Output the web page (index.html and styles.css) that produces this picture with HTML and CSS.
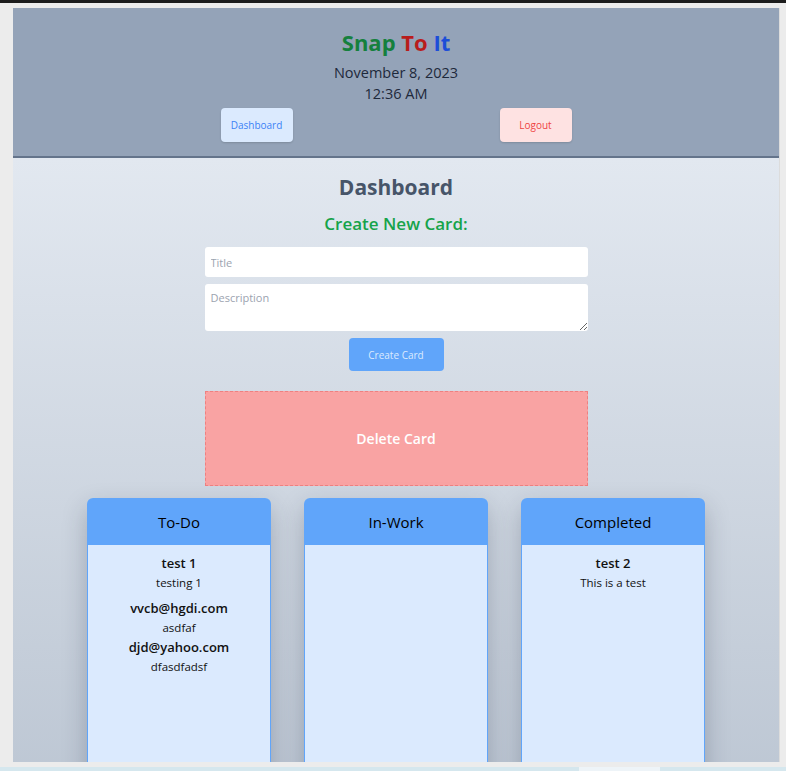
FILE: index.html
```html
<!DOCTYPE html>
<html lang="en">
<head>
  <meta charset="UTF-8">
  <title>Snap To It</title>
  <link rel="stylesheet" href="styles.css">
</head>
<body>

  <div class="topbar"></div>

  <div class="frame">
    <header class="header">
      <h1 class="logo"><span class="green">Snap</span> <span class="red">To</span> <span class="blue">It</span></h1>
      <div class="date">November 8, 2023</div>
      <div class="time">12:36 AM</div>
      <nav class="nav">
        <button class="nav-btn dash">Dashboard</button>
        <button class="nav-btn logout">Logout</button>
      </nav>
    </header>

    <main class="main">
      <h2 class="page-title">Dashboard</h2>
      <h3 class="create-title">Create New Card:</h3>

      <form class="create-form">
        <input type="text" placeholder="Title">
        <textarea placeholder="Description"></textarea>
        <button type="button" class="create-btn">Create Card</button>
      </form>

      <div class="delete-zone">Delete Card</div>

      <div class="columns">
        <div class="column">
          <div class="column-head">To-Do</div>
          <div class="column-body">
            <div class="card first">
              <div class="card-title">test 1</div>
              <div class="card-desc">testing 1</div>
            </div>
            <div class="card">
              <div class="card-title">vvcb@hgdi.com</div>
              <div class="card-desc">asdfaf</div>
            </div>
            <div class="card">
              <div class="card-title">djd@yahoo.com</div>
              <div class="card-desc">dfasdfadsf</div>
            </div>
          </div>
        </div>
        <div class="column">
          <div class="column-head">In-Work</div>
          <div class="column-body"></div>
        </div>
        <div class="column">
          <div class="column-head">Completed</div>
          <div class="column-body">
            <div class="card first">
              <div class="card-title">test 2</div>
              <div class="card-desc">This is a test</div>
            </div>
          </div>
        </div>
      </div>
    </main>
  </div>

  <div class="bottombar">
    <span class="seg"></span>
  </div>

</body>
</html>
```

FILE: styles.css
```css
body {
  margin: 0;
  height: 771px;
  overflow: hidden;
  background-color: #ececec;
  font-family: "Open Sans", "Noto Sans", sans-serif;
}
.topbar {
  height: 3px;
  background-color: #1c1c1c;
}
.frame {
  margin: 5px 0 0 13px;
  width: 766px;
  height: 754px;
  overflow: hidden;
  border-right: 1px solid #dcdcdc;
  display: flex;
  flex-direction: column;
}
.header {
  background-color: #94a3b8;
  border-bottom: 2px solid #64748b;
  height: 150px;
  box-sizing: border-box;
  padding-top: 20px;
  text-align: center;
  flex-shrink: 0;
}
.logo {
  margin: 0;
  font-size: 22px;
  line-height: 28px;
  font-weight: bold;
}
.green { color: #15803d; }
.red { color: #b91c1c; }
.blue { color: #1d4ed8; }
.date, .time {
  font-size: 14.5px;
  line-height: 21px;
  color: #1e293b;
}
.date { margin-top: 6px; }
.nav {
  display: flex;
  justify-content: center;
  gap: 207px;
  margin-top: 4px;
}
.nav-btn {
  width: 72px;
  height: 34px;
  border: none;
  border-radius: 4px;
  font-family: inherit;
  font-size: 10px;
  box-shadow: 0 1px 2px rgba(0, 0, 0, 0.15);
}
.dash {
  background-color: #dbeafe;
  color: #3b82f6;
}
.logout {
  background-color: #fee2e2;
  color: #ef4444;
}
.main {
  flex: 1;
  background: linear-gradient(#e2e8f0, #bcc6d3);
  text-align: center;
  padding-top: 15px;
}
.page-title {
  margin: 0;
  font-size: 21px;
  line-height: 28px;
  color: #475569;
}
.create-title {
  margin: 11px 0 0;
  font-size: 17px;
  line-height: 24px;
  font-weight: 600;
  color: #16a34a;
}
.create-form {
  width: 383px;
  margin: 11px auto 0;
  display: flex;
  flex-direction: column;
  align-items: center;
  gap: 7px;
}
.create-form input, .create-form textarea {
  width: 100%;
  box-sizing: border-box;
  border: none;
  border-radius: 3px;
  background-color: #fff;
  font-family: inherit;
  font-size: 11px;
  padding: 6px;
  color: #374151;
}
.create-form input { height: 30px; }
.create-form textarea {
  height: 47px;
  resize: vertical;
}
.create-form ::placeholder { color: #9ca3af; }
.create-btn {
  width: 95px;
  height: 33px;
  border: none;
  border-radius: 4px;
  background-color: #60a5fa;
  color: #dbeafe;
  font-family: inherit;
  font-size: 10px;
}
.delete-zone {
  width: 383px;
  height: 95px;
  box-sizing: border-box;
  margin: 20px auto 0;
  background-color: #f9a3a3;
  border: 1px dashed #ef8080;
  color: #fff;
  font-weight: 600;
  font-size: 14px;
  display: flex;
  align-items: center;
  justify-content: center;
}
.columns {
  display: flex;
  justify-content: center;
  gap: 33px;
  margin-top: 12px;
}
.column {
  width: 184px;
  height: 300px;
  border-radius: 6px 6px 0 0;
  box-shadow: 0 10px 25px rgba(30, 41, 59, 0.25);
  overflow: hidden;
}
.column-head {
  background-color: #60a5fa;
  height: 47px;
  line-height: 48px;
  font-size: 15px;
  color: #000;
}
.column-body {
  background-color: #dbeafe;
  height: 100%;
  border: 1px solid #60a5fa;
  border-top: none;
  padding-top: 8px;
}
.card {
  color: #111;
}
.card.first {
  margin-bottom: 6px;
}
.card-title {
  font-size: 13px;
  font-weight: 600;
  line-height: 20px;
}
.card-desc {
  font-size: 11.5px;
  line-height: 19px;
}
.bottombar {
  margin-top: 5px;
  height: 4px;
  background-color: #d5e7ee;
  position: relative;
}
.seg {
  position: absolute;
  left: 579px;
  width: 81px;
  top: 0;
  bottom: 0;
  background-color: #eef4f8;
}
```
